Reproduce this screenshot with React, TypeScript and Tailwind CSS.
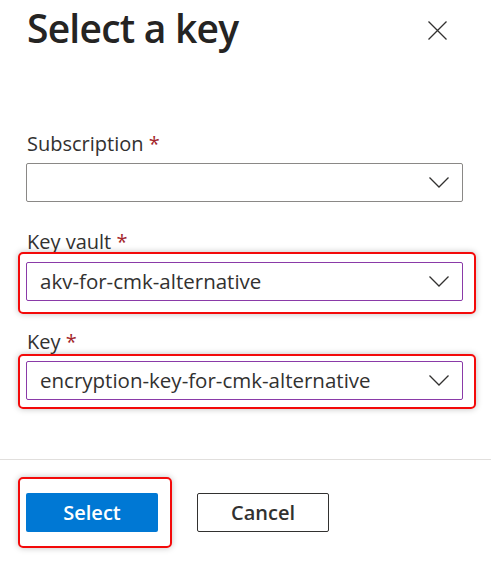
import { ReactNode } from "react";

const Chevron = () => (
  <svg width="20" height="11" viewBox="0 0 20 11" fill="none">
    <polyline points="0.5,0.5 10,10 19.5,0.5" stroke="#323130" strokeWidth="1.3" />
  </svg>
);

const CloseIcon = () => (
  <svg width="19" height="19" viewBox="0 0 19 19" fill="none">
    <path d="M0.5 0.5 L18.5 18.5 M18.5 0.5 L0.5 18.5" stroke="#323130" strokeWidth="1.3" />
  </svg>
);

const Label = ({ children, className = "" }: { children: ReactNode; className?: string }) => (
  <div className={`text-[20px] leading-[22px] text-[#323130] ${className}`}>
    {children} <span className="text-[#a4262c]">*</span>
  </div>
);

const Dropdown = ({ value, focused }: { value?: string; focused?: boolean }) => (
  <div
    className={`flex h-[39px] w-[437px] items-center justify-between rounded-[2px] border bg-white pl-[13px] pr-[13px] ${
      focused ? "border-[#8a3aa8]" : "border-[#8a8886]"
    }`}
  >
    <span className="text-[20.5px] text-[#323130]">{value}</span>
    <Chevron />
  </div>
);

export default function App() {
  return (
    <div className="flex h-[568px] w-[491px] flex-col bg-white font-['Segoe_UI','Open_Sans',sans-serif] text-[#323130]">
      <div className="flex items-start justify-between pl-[27px] pr-[44px]">
        <h1 className="text-[39px] font-semibold leading-[56px] tracking-[-0.02em] text-[#252423]">Select a key</h1>
        <div className="mt-[21px]">
          <CloseIcon />
        </div>
      </div>

      <div className="flex flex-col pl-[26px]">
        <Label className="ml-[1px] mt-[77px]">Subscription</Label>
        <div className="mt-[8px]">
          <Dropdown />
        </div>

        <Label className="ml-[1px] mt-[29px]">Key vault</Label>
        <div className="-ml-[8px] -mt-[1px] w-[458px] rounded-[5px] border-2 border-[#f30a0a] pb-[11px] pl-[6px] pt-[8px] shadow-[0_0_6px_rgba(0,0,0,0.25)]">
          <Dropdown value="akv-for-cmk-alternative" focused />
        </div>

        <Label className="ml-[1px] mt-[17px]">Key</Label>
        <div className="-ml-[8px] mt-[1px] w-[458px] rounded-[5px] border-2 border-[#f30a0a] pb-[7px] pl-[6px] pt-[5px] shadow-[0_0_6px_rgba(0,0,0,0.25)]">
          <Dropdown value="encryption-key-for-cmk-alternative" focused />
        </div>
      </div>

      <div className="mt-[50px] border-t border-[#e1dfdd]">
        <div className="flex items-center gap-[25px] pl-[18px] pt-[17px]">
          <div className="rounded-[5px] border-2 border-[#f30a0a] pb-[14px] pl-[6px] pr-[12px] pt-[14px] shadow-[0_0_6px_rgba(0,0,0,0.25)]">
            <button className="h-[39px] w-[132px] rounded-[2px] bg-[#0078d4] text-[20px] font-semibold text-white">
              Select
            </button>
          </div>
          <button className="h-[39px] w-[132px] rounded-[2px] border border-[#323130] bg-white text-[20px] font-semibold text-[#323130]">
            Cancel
          </button>
        </div>
      </div>
    </div>
  );
}
